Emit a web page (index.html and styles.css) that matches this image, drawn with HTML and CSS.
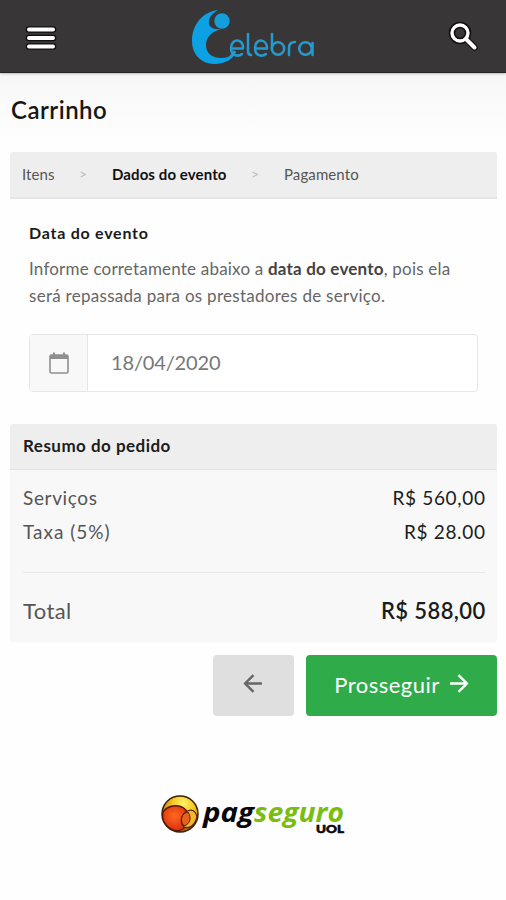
FILE: index.html
```html
<!DOCTYPE html>
<html lang="pt-BR">
<head>
<meta charset="utf-8">
<title>Carrinho</title>
<link rel="stylesheet" href="styles.css">
</head>
<body>
<header class="topbar">
  <svg class="menu" viewBox="0 0 32 26"><path d="M4 4.500H28M4 13H28M4 21.500H28" stroke="#111" stroke-width="6.600" stroke-linecap="round"/><path d="M4 4.500H28M4 13H28M4 21.500H28" stroke="#fff" stroke-width="4" stroke-linecap="round"/></svg>
  <svg class="brand" viewBox="0 0 130 60">
    <path d="M27 3C11 5 1 18 1 34c0 14 10 23 23 23 9 0 15-4 18-10-3 3-7 4-12 4-9 0-15-5-15-13 0-8 6-14 16-16-9 1-14-2-13-8 0-4 4-8 9-11Z" fill="#0ba1e2"/>
    <circle cx="31" cy="14" r="7.700" fill="#129fda"/>
    <path d="M35 53c5-2 7-5 9-9" fill="none" stroke="#0ba1e2" stroke-width="3"/>
    <g fill="none" stroke="#249bd0" stroke-width="2.500" stroke-linecap="round" stroke-linejoin="round">
      <path d="M42 41.500H52C53 31 40 31 40 41C40 49 47 50 51 47"/>
      <path d="M57 27V44Q57 48 60 48"/>
      <path d="M65 41.500H76C76 31 64 31 64 41C64 49 71 50 75 47"/>
      <path d="M81 27V42"/><circle cx="87" cy="41.500" r="6.200"/>
      <path d="M98 48V41Q98 35 104 35"/>
      <circle cx="114.500" cy="41.500" r="6.300"/><path d="M121.500 36V48"/>
    </g>
  </svg>
  <svg class="search" viewBox="0 0 32 32"><g fill="none" stroke-linecap="round"><path d="M18 18L26.500 26.500" stroke="#111" stroke-width="6.500"/><circle cx="12" cy="12" r="8" stroke="#111" stroke-width="6.500"/><path d="M18 18L26.500 26.500" stroke="#fff" stroke-width="4"/><circle cx="12" cy="12" r="8" stroke="#fff" stroke-width="3.400"/></g></svg>
</header>
<main class="page">
  <h1 class="title">Carrinho</h1>
  <nav class="steps"><span class="step s1">Itens</span><span class="sep">&gt;</span><b class="step s2">Dados do evento</b><span class="sep">&gt;</span><span class="step s3">Pagamento</span></nav>
  <section class="event">
    <h2 class="event-title">Data do evento</h2>
    <p class="info"><span class="l1">Informe corretamente abaixo a <b>data do evento</b>, pois ela</span><br><span class="l2">será repassada para os prestadores de serviço.</span></p>
    <div class="field">
      <span class="addon"><svg class="calendar" viewBox="0 0 20 22"><rect x="1" y="3" width="18" height="18" rx="1.500" fill="none" stroke="#8f8f8f" stroke-width="1.600"/><path d="M1 3H19V7H1ZM4 .5H6V3H4ZM14 .5H16V3H14Z" fill="#8f8f8f"/></svg></span>
      <span class="date">18/04/2020</span>
    </div>
  </section>
  <section class="summary">
    <h2 class="summary-head">Resumo do pedido</h2>
    <div class="rows">
      <div class="row"><span class="r1">Serviços</span><span class="price">R$ 560,00</span></div>
      <div class="row"><span class="r2">Taxa (5%)</span><span class="price">R$ 28.00</span></div>
      <div class="row total"><span class="r3">Total</span><span class="price p3">R$ 588,00</span></div>
    </div>
  </section>
  <div class="actions">
    <button class="back"><svg class="arrow" viewBox="0 0 20 20"><path d="M18 10H2M10 2L2 10L10 18"/></svg></button>
    <button class="next"><span class="t-next">Prosseguir</span><svg class="arrow" viewBox="0 0 20 20"><path d="M2 10H18M10 2L18 10L10 18"/></svg></button>
  </div>
</main>
<footer class="payment">
  <svg class="pagseguro" viewBox="0 0 186 42">
    <defs><radialGradient id="ball" cx=".6" cy=".2" r=".8"><stop offset="0" stop-color="#fff36a"/><stop offset=".4" stop-color="#f5c51d"/><stop offset="1" stop-color="#a4550c"/></radialGradient>
    <radialGradient id="core" cx=".45" cy=".4" r=".7"><stop offset="0" stop-color="#ff6a1c"/><stop offset="1" stop-color="#d52212"/></radialGradient></defs>
    <circle cx="20" cy="21" r="18" fill="url(#ball)" stroke="#3a2108" stroke-width="1.500"/>
    <path d="M3 19C8 12 22 9 28 20C32 29 25 37 17 38C7 36 1 28 3 19Z" fill="url(#core)" stroke="#541607" stroke-width="1.300"/>
    <path d="M24 34C18 27 23 18 31 17Q36 18 37 24C35 32 30 36 24 34Z" fill="#f3b728" stroke="#542007" stroke-width="1.200"/>
    <path d="M24 33C19 27 22 20 28 19C32 25 30 31 24 33Z" fill="#e8601b" stroke="#542007"/>
    <text class="logo-word" x="43" y="29" textLength="51" lengthAdjust="spacingAndGlyphs">pag</text>
    <text class="logo-word green" x="94" y="29" textLength="90" lengthAdjust="spacingAndGlyphs">seguro</text>
    <text class="logo-uol" x="156" y="39.500" textLength="28" lengthAdjust="spacingAndGlyphs">UOL</text>
  </svg>
</footer>
</body>
</html>
```
FILE: styles.css
```css
* { box-sizing: border-box; }
body { margin: 0; height: 900px; background: linear-gradient(#f7f7f7 73px, #fefefe 145px); font-family: Lato, "Open Sans", sans-serif; color: #555; }
h1, h2, p { margin: 0; }
.topbar { height: 73px; background: #393637; border-bottom: 1px solid #252323; box-shadow: 0 1px 2px #8888; display: flex; justify-content: space-between; padding: 8px 26px 0 25px; }
.menu { width: 32px; height: 26px; margin-top: 17px; }
.brand { width: 130px; height: 60px; margin: -1px 0 0 7px; }
.search { width: 32px; height: 32px; margin-top: 13px; }
.page { padding: 0 9px 0 10px; }
.title { height: 79px; padding: 22px 0 0 1px; font-size: 24px; line-height: 30px; font-weight: 600; letter-spacing: .5px; color: #161616; }
.steps { height: 47px; background: #eee; border-bottom: 2px solid #e5e5e5; border-radius: 3px 3px 0 0; padding: 0 12px 2px; display: flex; align-items: center; font-size: 15px; letter-spacing: .1px; }
.sep { color: #bbb; width: 10px; text-align: center; font-size: 14px; }
.step { white-space: nowrap; }
.s1 { width: 56px; }
.s2 { width: 138px; margin-left: 24px; color: #111; }
.s3 { margin-left: 24px; }
.event { height: 225px; padding: 24px 19px 0; }
.event-title { font-size: 16px; line-height: 20px; letter-spacing: .75px; color: #1a1a1a; }
.info { margin-top: 12px; font-size: 17px; line-height: 27px; white-space: nowrap; color: #666; }
.l1 { letter-spacing: .2px; }
.l2 { letter-spacing: .28px; }
.info b { color: #444; }
.field { margin-top: 25px; height: 58px; border: 1.5px solid #e6e6e6; border-radius: 4px; background: #fff; display: flex; }
.addon { width: 58px; background: #f8f8f8; border-right: 1.5px solid #e6e6e6; display: flex; justify-content: center; align-items: center; }
.calendar { width: 20px; height: 22px; }
.date { margin: 13px 0 0 23px; font-size: 20px; line-height: 28px; letter-spacing: -.15px; color: #777; }
.summary { height: 218px; background: #f8f8f8; border-radius: 3px; overflow: hidden; }
.summary-head { height: 46px; padding-left: 13px; background: #eee; border-bottom: 1px solid #e3e3e3; font-size: 17px; line-height: 44px; letter-spacing: .47px; color: #1c1c1c; }
.rows { padding: 11px 12px 0 13px; }
.row { height: 34px; display: flex; justify-content: space-between; font-size: 19px; line-height: 34px; letter-spacing: .65px; }
.r2 { letter-spacing: 1px; }
.price { color: #1c1c1c; margin-right: -.6px; }
.total { margin-top: 23px; border-top: 1.5px solid #e9e9e9; height: 70px; padding-top: 21px; font-size: 22px; letter-spacing: .4px; }
.p3 { font-weight: 600; }
.actions { display: flex; justify-content: flex-end; gap: 12px; margin-top: 13px; }
.actions button { height: 61px; border: 0; border-radius: 4px; padding: 0; font: inherit; display: flex; align-items: center; justify-content: center; }
.back { width: 81px; background: #dfdfdf; color: #666; }
.actions .next { width: 191px; background: #2fab49; color: #fff; font-size: 22px; gap: 8px; padding-bottom: 2px; letter-spacing: .5px; }
.arrow { width: 21px; height: 21px; fill: none; stroke: currentColor; stroke-width: 2.3; margin-top: -5px; }
.next .arrow { margin-top: -3px; }
.payment { display: flex; justify-content: center; margin-top: 77px; }
.pagseguro { width: 186px; height: 42px; }
.logo-word { font: italic 700 26px "Open Sans", sans-serif; fill: #080808; }
.logo-word.green { fill: #79bd13; }
.logo-uol { font: 900 12px Lato, sans-serif; fill: #080808; stroke: #080808; stroke-width: .6; }
```
